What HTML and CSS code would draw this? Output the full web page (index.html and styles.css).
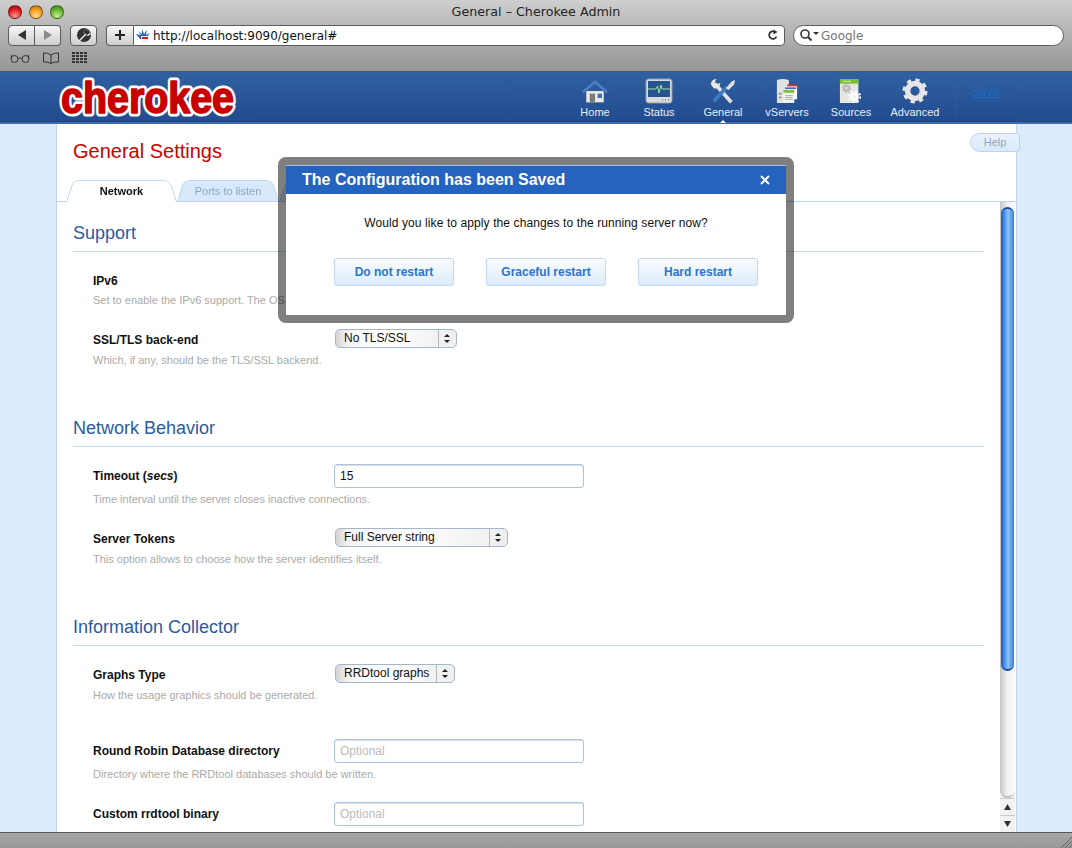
FILE: index.html
```html
<!DOCTYPE html>
<html lang="en">
<head>
  <meta charset="UTF-8">
  <title>General - Cherokee Admin</title>
  <link rel="stylesheet" href="styles.css">
</head>
<body>
  <div class="chrome">
    <div class="titlebar">
      <div class="lights">
        <span class="light red"></span>
        <span class="light amber"></span>
        <span class="light green"></span>
      </div>
      <div class="window-title">General – Cherokee Admin</div>
    </div>

    <div class="toolbar">
      <div class="btn-pair">
        <button class="tool-btn back"><svg width="12" height="12" viewBox="0 0 12 12"><path d="M2 6l8-5v10z" fill="#333"/></svg></button>
        <button class="tool-btn forward"><svg width="12" height="12" viewBox="0 0 12 12"><path d="M10 6l-8-5v10z" fill="#8a8a8a"/></svg></button>
      </div>
      <button class="tool-btn safari">
        <svg width="20" height="16" viewBox="0 0 20 16"><circle cx="10" cy="8" r="7" fill="#333"/><path d="M4 14L11 7l-2-2 3-3 5 5-3 2-2-1-6 6z" fill="#eee"/><path d="M9 5l3-3 4 4-3 2z" fill="#333"/></svg>
      </button>
      <div class="address">
        <button class="add-btn"><svg width="12" height="12" viewBox="0 0 12 12"><path d="M5 1h2v4h4v2H7v4H5V7H1V5h4z" fill="#222"/></svg></button>
        <div class="url-field">
          <svg class="favicon" width="17" height="17" viewBox="0 0 17 17">
            <path d="M1 7l5 1-3-4 4 3 0-5 2 5 3-4-1 5 4-2-3 4-3 3-4-1z" fill="#2f67b5"/>
            <path d="M6 9h7v6H7z" fill="#eee"/><path d="M7 10h6v2H7z" fill="#c22"/>
          </svg>
          <span class="url-text">http://localhost:9090/general#</span>
          <svg class="reload" width="12" height="12" viewBox="0 0 12 12"><path d="M9.5 7.5A3.8 3.8 0 1 1 8 2.9" fill="none" stroke="#333" stroke-width="1.8"/><path d="M6.5 0.5l4 2.5-4 2.5z" fill="#333"/></svg>
        </div>
      </div>
      <div class="search-field">
        <svg width="22" height="14" viewBox="0 0 22 14"><circle cx="6" cy="6" r="4" fill="none" stroke="#333" stroke-width="1.6"/><path d="M9 9l3.500 3.500" stroke="#333" stroke-width="2"/><path d="M14 4h6l-3 3z" fill="#333"/></svg>
        <span>Google</span>
      </div>
    </div>

    <div class="bookmarks">
      <svg width="20" height="10" viewBox="0 0 20 10" fill="none" stroke="#333"><circle cx="4.500" cy="6" r="3.500"/><circle cx="15.500" cy="6" r="3.500"/><path d="M8 5.500q2-1.500 4 0M1 5l1-3M19 5l-1-3"/></svg>
      <svg width="18" height="12" viewBox="0 0 18 12" fill="none" stroke="#333"><path d="M9 3Q6 0.500 1.500 1v9Q6 9.500 9 11.500 12 9.500 16.500 10V1Q12 0.500 9 3zM9 3v8.500"/></svg>
      <svg width="15" height="12" viewBox="0 0 15 12" fill="#333"><path d="M0 0h3v2H0zM4 0h3v2H4zM8 0h3v2H8zM12 0h3v2h-3zM0 3h3v2H0zM4 3h3v2H4zM8 3h3v2H8zM12 3h3v2h-3zM0 6h3v2H0zM4 6h3v2H4zM8 6h3v2H8zM12 6h3v2h-3zM0 9h3v2H0zM4 9h3v2H4zM8 9h3v2H8zM12 9h3v2h-3z"/></svg>
    </div>
  </div>

  <header class="app-header">
    <svg class="logo" width="184" height="50" viewBox="0 0 184 50">
      <defs>
        <text id="logo-word" x="5" y="41" textLength="173" lengthAdjust="spacingAndGlyphs">cherokee</text>
      </defs>
      <use href="#logo-word" class="logo-halo"/>
      <use href="#logo-word" class="logo-ink"/>
    </svg>

    <nav class="main-nav">
      <a class="nav-item">
        <svg width="28" height="26" viewBox="0 0 32 28">
          <path d="M6 14h20v13H6z" fill="#e8e8e4"/>
          <path d="M10 17h6v10h-6z" fill="#7c7c78"/><path d="M19 17h5v5h-5z" fill="#3f73b8"/>
          <path d="M16 1L1 14l2 3L16 6l13 11 2-3z" fill="#4d7fc0" stroke="#2a538f" stroke-width=".6"/>
        </svg>
        <span>Home</span>
      </a>
      <a class="nav-item">
        <svg width="28" height="26" viewBox="0 0 28 26">
          <rect x="1" y="1" width="26" height="24" rx="2.500" fill="#d8dcdc" stroke="#8e9aa4"/>
          <rect x="3" y="3" width="22" height="16" fill="#25558f"/>
          <path d="M3 11h8l1.500-3 1.500 7 2-8 1 4h8" fill="none" stroke="#9fe0a0"/>
          <path d="M17 22h1M20 22h1M23 22h1" stroke="#888" stroke-width="1.500"/>
        </svg>
        <span>Status</span>
      </a>
      <a class="nav-item current">
        <svg width="26" height="26" viewBox="0 0 28 28">
          <path d="M23 26L5 6" stroke="#e2e2e2" stroke-width="4"/>
          <path d="M1 7a5.500 5.500 0 0 1 6-6L5 4.500 7.500 7 11 5a5.500 5.500 0 0 1-7 6z" fill="#e8e8e8"/>
          <path d="M4 25L18 10" stroke="#3f78c4" stroke-width="4"/>
          <path d="M17 11l6-7 4-2-1 5-6 6z" fill="#e2e2e2"/>
        </svg>
        <span>General</span>
      </a>
      <a class="nav-item">
        <svg width="22" height="26" viewBox="0 0 24 28">
          <path d="M1 2q6-2 13 0v25H1z" fill="#e2e2e2"/>
          <path d="M3 16h3v2H3zM3 20h3v2H3z" fill="#999"/>
          <path d="M11 8h12v15H11z" fill="#fff"/><path d="M12 7h11v2H12z" fill="#d83030"/>
          <path d="M10 10h12v2H10z" fill="#3c6fc0"/><path d="M8 13h12v14H8z" fill="#f2f2ee"/><path d="M8 13h12v3H8z" fill="#7cc23c"/>
          <path d="M10 19h8M10 21h8M10 23h8" stroke="#aaa"/>
        </svg>
        <span>vServers</span>
      </a>
      <a class="nav-item">
        <svg width="24" height="26" viewBox="0 0 26 28">
          <path d="M1 1h20v26H1z" fill="#e6e6e2"/><path d="M1 1h20v5H1z" fill="#78c028"/><path d="M4 3h9v1H4z" fill="#d8f0b0"/>
          <circle cx="8" cy="11" r="2.500" fill="none" stroke="#bbb" stroke-width="2.500"/>
          <circle cx="8" cy="11" r="4.500" fill="none" stroke="#bbb" stroke-width="1.500" stroke-dasharray="2 1.500"/>
          <circle cx="17" cy="20" r="3" fill="none" stroke="#fff" stroke-width="3"/>
          <circle cx="17" cy="20" r="6" fill="none" stroke="#fff" stroke-width="2" stroke-dasharray="2.400 2.300"/>
        </svg>
        <span>Sources</span>
      </a>
      <a class="nav-item">
        <svg width="26" height="26" viewBox="0 0 28 28">
          <circle cx="14" cy="14" r="8" fill="none" stroke="#e6e6e6" stroke-width="6"/>
          <circle cx="14" cy="14" r="11.500" fill="none" stroke="#e6e6e6" stroke-width="4" stroke-dasharray="4.500 4.530"/>
        </svg>
        <span>Advanced</span>
      </a>
    </nav>

    <div class="save-box"><a href="#">Save</a></div>
  </header>

  <main class="page">
    <div class="side"></div>
    <div class="panel">
      <h1 class="page-title">General Settings</h1>

      <div class="tabs">
        <div class="tab active">Network</div>
        <div class="tab ports">Ports to listen</div>
        <div class="tab blank"></div>
      </div>

      <div class="scroll-area">
        <div class="settings">
          <section>
            <h2>Support</h2>
            <div class="row first check-row">
              <label>IPv6</label>
              <div></div>
              <p class="help">Set to enable the IPv6 support. The OS must support IPv6 for this to work.</p>
            </div>
            <div class="row">
              <label>SSL/TLS back-end</label>
              <div class="select w-tls"><span>No TLS/SSL</span><i class="arrows"></i></div>
              <p class="help">Which, if any, should be the TLS/SSL backend.</p>
            </div>
          </section>

          <section>
            <h2>Network Behavior</h2>
            <div class="row first text-row">
              <label>Timeout (<em>secs</em>)</label>
              <input type="text" value="15">
              <p class="help">Time interval until the server closes inactive connections.</p>
            </div>
            <div class="row">
              <label>Server Tokens</label>
              <div class="select w-tokens"><span>Full Server string</span><i class="arrows"></i></div>
              <p class="help">This option allows to choose how the server identifies itself.</p>
            </div>
          </section>

          <section>
            <h2>Information Collector</h2>
            <div class="row first">
              <label>Graphs Type</label>
              <div class="select w-graphs"><span>RRDtool graphs</span><i class="arrows"></i></div>
              <p class="help">How the usage graphics should be generated.</p>
            </div>
            <div class="row spaced text-row">
              <label>Round Robin Database directory</label>
              <input type="text" placeholder="Optional">
              <p class="help">Directory where the RRDtool databases should be written.</p>
            </div>
            <div class="row text-row tight">
              <label>Custom rrdtool binary</label>
              <input type="text" placeholder="Optional">
            </div>
          </section>
        </div>

        <div class="scrollbar">
          <div class="track">
            <div class="thumb"></div>
          </div>
          <div class="arrow"><svg width="9" height="8" viewBox="0 0 9 8"><path d="M4.500 1L8 7H1z" fill="#333"/></svg></div>
          <div class="arrow"><svg width="9" height="8" viewBox="0 0 9 8"><path d="M4.500 7L8 1H1z" fill="#333"/></svg></div>
        </div>
      </div>
    </div>
    <div class="side right"></div>
  </main>

  <footer class="statusbar">
    <svg width="12" height="12" viewBox="0 0 12 12" stroke="#666"><path d="M1 12L12 1M5 12l7-7M9 12l3-3"/></svg>
  </footer>

  <a class="help-btn" href="#">Help</a>

  <div class="modal">
    <div class="modal-inner">
      <div class="modal-head">
        <span>The Configuration has been Saved</span>
        <svg width="10" height="10" viewBox="0 0 10 10"><path d="M1 1l8 8M9 1l-8 8" stroke="#fff" stroke-width="2"/></svg>
      </div>
      <p class="modal-text">Would you like to apply the changes to the running server now?</p>
      <div class="modal-buttons">
        <button>Do not restart</button>
        <button>Graceful restart</button>
        <button>Hard restart</button>
      </div>
    </div>
  </div>
</body>
</html>
```

FILE: styles.css
```css
* {
  box-sizing: border-box;
}
html, body {
  margin: 0;
  height: 848px;
  overflow: hidden;
}
body {
  position: relative;
  display: flex;
  flex-direction: column;
  font-family: "Liberation Sans", Arial, sans-serif;
  font-size: 12px;
  color: #111;
  background: #dcebfc;
}
button {
  font-family: inherit;
  padding: 0;
}

/* browser chrome */
.chrome {
  height: 72px;
  background: linear-gradient(#cfcfcf, #bcbcbc 30%, #969696);
  border-bottom: 1px solid #555;
  flex: none;
}
.titlebar {
  display: flex;
  align-items: center;
  height: 23px;
  padding-left: 8px;
  position: relative;
}
.lights {
  display: flex;
  gap: 7px;
}
.light {
  width: 14px;
  height: 14px;
  border-radius: 50%;
  border: 1px solid rgba(0, 0, 0, .4);
}
.red { background: radial-gradient(circle at 50% 85%, #ff9a90, #d81c20 60%, #a00); }
.amber { background: radial-gradient(circle at 50% 85%, #ffdd90, #ee9a20 60%, #b06800); }
.green { background: radial-gradient(circle at 50% 85%, #c8f090, #62b030 60%, #3a8010); }
.window-title {
  position: absolute;
  left: 0;
  right: 0;
  text-align: center;
  font-family: "DejaVu Sans", sans-serif;
  font-size: 12.700px;
  color: #222;
}
.toolbar {
  display: flex;
  align-items: center;
  height: 20px;
  margin-top: 2px;
  padding-left: 8px;
}
.btn-pair {
  display: flex;
  width: 53px;
  margin-right: 9px;
}
.tool-btn {
  display: flex;
  align-items: center;
  justify-content: center;
  height: 21px;
  border: 1px solid #5c5c5c;
  background: linear-gradient(#f6f6f6, #cfcfcf);
}
.back {
  width: 27px;
  border-radius: 4px 0 0 4px;
}
.forward {
  width: 26px;
  border-left: 0;
  border-radius: 0 4px 4px 0;
}
.safari {
  width: 27px;
  border-radius: 4px;
  margin-right: 9px;
}
.address {
  display: flex;
  width: 679px;
  height: 21px;
  margin-right: 8px;
}
.add-btn {
  display: flex;
  align-items: center;
  justify-content: center;
  width: 27px;
  border: 1px solid #5c5c5c;
  border-right: 0;
  border-radius: 4px 0 0 4px;
  background: linear-gradient(#f6f6f6, #cfcfcf);
}
.url-field {
  flex: 1;
  display: flex;
  align-items: center;
  background: #fff;
  border: 1px solid #5c5c5c;
  border-radius: 0 4px 4px 0;
  padding: 0 5px 0 1px;
}
.favicon {
  margin-right: 1px;
}
.url-text {
  flex: 1;
  padding-top: 1px;
  font-family: "DejaVu Sans", sans-serif;
  font-size: 12px;
  letter-spacing: -.02px;
  color: #111;
}
.search-field {
  display: flex;
  align-items: center;
  width: 271px;
  height: 21px;
  padding-left: 5px;
  background: #fff;
  border: 1px solid #5c5c5c;
  border-radius: 11px;
  font-family: "DejaVu Sans", sans-serif;
  font-size: 12px;
  color: #777;
}
.search-field span {
  padding-top: 1px;
}
.bookmarks {
  display: flex;
  align-items: center;
  gap: 12px;
  height: 14px;
  margin-top: 6px;
  padding-left: 10px;
}

/* cherokee header */
.app-header {
  flex: none;
  position: relative;
  display: flex;
  height: 52px;
  padding-left: 56px;
  background: linear-gradient(#30609f, #214c90);
  border-bottom: 2px solid #3a6cae;
  box-shadow: inset 0 -1px 0 #1d4380;
}
.logo {
  font-family: "Liberation Sans", Arial, sans-serif;
  font-size: 44px;
  font-weight: bold;
}
.logo-halo {
  fill: #fff;
  stroke: #fff;
  stroke-width: 7;
  stroke-linejoin: round;
}
.logo-ink {
  fill: #c80000;
  stroke: #c80000;
  stroke-width: 1.600;
  stroke-linejoin: round;
}
.main-nav {
  display: flex;
  margin-left: 323px;
}
.nav-item {
  position: relative;
  display: flex;
  flex-direction: column;
  align-items: center;
  justify-content: flex-end;
  width: 64px;
  height: 47px;
  gap: 2px;
  font-size: 11px;
  line-height: 13px;
  color: #e8eef6;
}
.nav-item.current::after {
  content: "";
  position: absolute;
  left: 29px;
  bottom: -4px;
  border: 3px solid transparent;
  border-top: 0;
  border-bottom-color: #fff;
}
.save-box {
  margin: 7px 0 6px 9px;
  padding: 6px 0 0 15px;
  border-left: 1px solid #2f5c9e;
}
.save-box a {
  color: #1a6bc8;
  font-size: 12px;
}

/* page body */
.page {
  flex: 1;
  display: flex;
  min-height: 0;
}
.side {
  width: 56px;
  flex: none;
}
.side.right {
  width: 55px;
}
.panel {
  flex: 1;
  min-width: 0;
  display: flex;
  flex-direction: column;
  background: #fff;
  border-left: 1px solid #c0d6ee;
  border-right: 1px solid #c0d6ee;
}
.page-title {
  margin: 15px 0 17px 16px;
  font-size: 20px;
  line-height: 24px;
  font-weight: normal;
  color: #cc0000;
}
.tabs {
  flex: none;
  display: flex;
  height: 22px;
  padding-left: 9px;
  border-bottom: 1px solid #bcd3ee;
}
.tab {
  position: relative;
  z-index: 0;
  width: 111px;
  height: 22px;
  text-align: center;
  line-height: 22px;
  font-size: 11px;
  color: #8ea6c4;
}
.tab::before {
  content: "";
  position: absolute;
  z-index: -1;
  inset: -5px 0 0;
  background: #d8e9fc;
  border: 1px solid #bcd3ee;
  border-radius: 7px 7px 0 0;
  transform-origin: bottom;
  transform: perspective(60px) rotateX(20deg);
}
.tab.active {
  z-index: 1;
  font-weight: bold;
  color: #111;
}
.tab.active::before {
  background: #fff;
  border-bottom-color: #fff;
}
.tab.ports {
  width: 102px;
}
.scroll-area {
  flex: 1;
  min-height: 0;
  display: flex;
  padding-right: 1px;
}
.settings {
  flex: 1;
  min-width: 0;
  padding: 0 16px;
  overflow: hidden;
}
section h2 {
  margin: 49px 0 0;
  height: 31px;
  padding-bottom: 6px;
  font-size: 18px;
  line-height: 24px;
  font-weight: normal;
  color: #2a5aa0;
  border-bottom: 1px solid #c6dbf0;
}
section:first-child h2 {
  margin-top: 19px;
}
.row {
  display: grid;
  grid-template-columns: 241px auto;
  justify-content: start;
  align-items: center;
  margin: 22px 0 0 20px;
}
.row.first {
  margin-top: 18px;
}
.row.first.check-row {
  margin-top: 20px;
}
.row.first.text-row {
  margin-top: 17px;
}
.row.spaced {
  margin-top: 37px;
}
.row.tight {
  margin-top: 21px;
}
.check-row > div {
  height: 15px;
}
.row label {
  align-self: end;
  font-weight: bold;
  line-height: 16px;
}
.check-row label {
  padding-top: 1px;
}
.text-row label {
  align-self: center;
}
.help {
  grid-column: 1 / 3;
  margin: 5px 0 0;
  font-size: 11px;
  line-height: 14px;
  color: #aaa;
  white-space: nowrap;
}
.text-row .help,
.check-row .help {
  margin-top: 4px;
}
.row input {
  width: 250px;
  height: 24px;
  padding: 0 5px;
  border: 1px solid #a9c4e2;
  border-radius: 3px;
  box-shadow: inset 0 1px 1px #ddd;
  font-family: inherit;
  font-size: 12px;
  color: #111;
}
.row input::placeholder {
  color: #bbb;
}
.select {
  display: flex;
  align-items: center;
  justify-content: space-between;
  height: 19px;
  margin-left: 1px;
  padding-left: 8px;
  border: 1px solid #a7b6c6;
  border-radius: 5px;
  background: linear-gradient(90deg, #d4d4d4, #f4f4f4 12px, #fff 40%, #eee);
  line-height: 17px;
}
.w-tls { width: 122px; }
.w-tokens { width: 173px; }
.w-graphs { width: 120px; }
.arrows {
  position: relative;
  width: 18px;
  height: 17px;
  border-left: 1px solid #b6b6b6;
}
.arrows::before,
.arrows::after {
  content: "";
  position: absolute;
  left: 5px;
  border: 3px solid transparent;
}
.arrows::before {
  top: 4px;
  border-top: 0;
  border-bottom: 3px solid #222;
}
.arrows::after {
  bottom: 4px;
  border-bottom: 0;
  border-top: 3px solid #222;
}

/* aqua scrollbar */
.scrollbar {
  flex: none;
  display: flex;
  flex-direction: column;
  width: 15px;
  background: #f2f2f2;
}
.track {
  flex: 1;
  padding: 5px 1px 0;
  background: linear-gradient(90deg, #c4c4c4, #f2f2f2 50%, #fafafa);
  border-radius: 0 0 8px 8px;
  border-bottom: 2px solid #bdbdbd;
}
.thumb {
  height: 464px;
  border-radius: 7px;
  background: linear-gradient(90deg, #1a58bc, #4f96ea 30%, #8cc4f8 55%, #3b7fd8);
  border-top: 2px solid #174a9c;
  border-bottom: 2px solid #174a9c;
}
.arrow {
  display: flex;
  align-items: center;
  justify-content: center;
  height: 17px;
  border-top: 1px solid #c8c8c8;
}

.statusbar {
  flex: none;
  display: flex;
  align-items: flex-end;
  justify-content: flex-end;
  height: 16px;
  background: linear-gradient(#a8a8a8, #979797);
  border-top: 1px solid #555;
}

/* things lying over the page */
.help-btn {
  position: absolute;
  left: 970px;
  top: 133px;
  width: 50px;
  height: 19px;
  text-align: center;
  line-height: 17px;
  font-size: 11px;
  color: #8ea6c4;
  text-decoration: none;
  background: linear-gradient(#eaf3fd, #d8e9fc);
  border: 1px solid #bcd3ee;
  border-radius: 10px 4px 4px 10px;
}
.modal {
  position: absolute;
  left: 278px;
  top: 157px;
  width: 516px;
  height: 166px;
  padding: 8px;
  background: rgba(0, 0, 0, .5);
  border-radius: 8px;
}
.modal-inner {
  height: 100%;
  background: #fff;
}
.modal-head {
  display: flex;
  align-items: center;
  justify-content: space-between;
  height: 29px;
  padding: 0 16px;
  background: #2563c0;
  border-top: 1px solid #a9c4e8;
  color: #fff;
  font-size: 16px;
  font-weight: bold;
}
.modal-text {
  margin: 21px 0 0;
  text-align: center;
  line-height: 16px;
  letter-spacing: .1px;
}
.modal-buttons {
  display: flex;
  justify-content: center;
  gap: 32px;
  margin-top: 27px;
  padding-left: 20px;
}
.modal-buttons button {
  width: 120px;
  height: 28px;
  background: linear-gradient(#fbfdff, #dcebfb);
  border: 1px solid #c0d6ee;
  border-radius: 3px;
  color: #2a75d0;
  font-size: 12px;
  font-weight: bold;
}
```
